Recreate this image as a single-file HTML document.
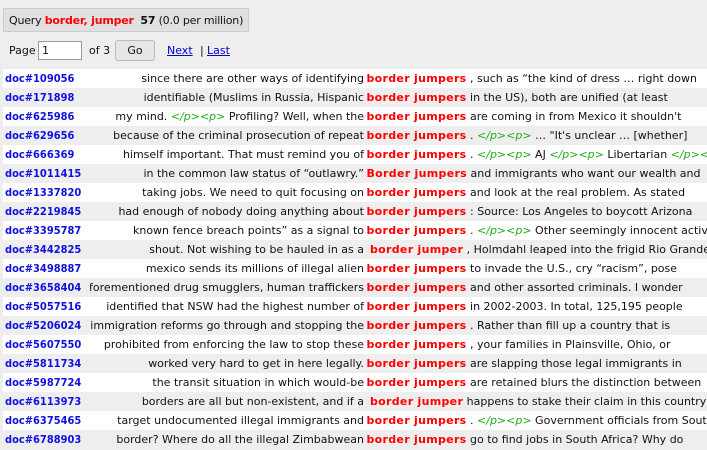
<!DOCTYPE html>
<html><head><meta charset="utf-8"><style>
body{margin:0;background:#eeeeee;font-family:"DejaVu Sans",Verdana,sans-serif;font-size:11px;color:#111;width:707px;height:450px;overflow:hidden;position:relative}
.q{position:absolute;left:3px;top:8px;height:24px;width:246px;background:#e0e0e0;border:1px solid #ccc;border-radius:2px;line-height:24px;padding-left:5px;box-sizing:border-box;font-size:11px;white-space:nowrap;letter-spacing:-0.2px}
.r{color:#f00;font-weight:bold}
.pg{position:absolute;top:40px;left:9px;height:22px;line-height:22px}
.in{position:absolute;left:38px;top:41px;width:44px;height:19px;border:1px solid #999;background:#fff;box-sizing:border-box;line-height:17px;padding-left:3px}
.of{position:absolute;left:89px;top:40px;line-height:22px}
.go{position:absolute;left:115px;top:40px;width:40px;height:21px;border:1px solid #bbb;border-radius:3px;background:#e6e6e6;text-align:center;line-height:20px;box-sizing:border-box}
.lk{position:absolute;top:40px;line-height:22px;color:#0000cc;text-decoration:underline}
.row{position:absolute;left:3px;width:704px;height:19px;line-height:19px;white-space:nowrap;overflow:hidden}
.row.w{background:#fff}
.d{position:absolute;left:2px;color:#1010e0;font-weight:bold;font-family:"DejaVu Sans Condensed","DejaVu Sans",sans-serif;font-size:11px}
.l{position:absolute;left:87px;width:274px;text-align:right;overflow:hidden;direction:rtl}
.l span{direction:ltr;unicode-bidi:embed}
.k{position:absolute;left:360px}
.kw{color:#f00;font-weight:bold;letter-spacing:0.3px}
.g{color:#22aa22;font-style:italic}
</style></head><body>
<div class="q">Query <span class="r">border, jumper</span> &nbsp;<b>57</b> (0.0 per million)</div>
<div class="pg">Page</div><div class="in">1</div><div class="of">of 3</div><div class="go">Go</div>
<div class="lk" style="left:167px">Next</div><div style="position:absolute;left:200px;top:40px;line-height:22px">|</div><div class="lk" style="left:207px">Last</div>

<div class="row w" style="top:69px"><span class="d">doc#109056</span><span class="l"><span>since there are other ways of identifying</span></span><span class="k">&nbsp;<span class="kw">border jumpers</span> , such as “the kind of dress … right down</span></div>
<div class="row" style="top:88px"><span class="d">doc#171898</span><span class="l"><span>identifiable (Muslims in Russia, Hispanic</span></span><span class="k">&nbsp;<span class="kw">border jumpers</span> in the US), both are unified (at least</span></div>
<div class="row w" style="top:107px"><span class="d">doc#625986</span><span class="l"><span>my mind. <span class="g">&lt;/p&gt;&lt;p&gt;</span> Profiling? Well, when the</span></span><span class="k">&nbsp;<span class="kw">border jumpers</span> are coming in from Mexico it shouldn't</span></div>
<div class="row" style="top:126px"><span class="d">doc#629656</span><span class="l"><span>because of the criminal prosecution of repeat</span></span><span class="k">&nbsp;<span class="kw">border jumpers</span> . <span class="g">&lt;/p&gt;&lt;p&gt;</span> … "It's unclear … [whether]</span></div>
<div class="row w" style="top:145px"><span class="d">doc#666369</span><span class="l"><span>himself important. That must remind you of</span></span><span class="k">&nbsp;<span class="kw">border jumpers</span> . <span class="g">&lt;/p&gt;&lt;p&gt;</span> AJ <span class="g">&lt;/p&gt;&lt;p&gt;</span> Libertarian <span class="g">&lt;/p&gt;&lt;p&gt;</span> Less</span></div>
<div class="row" style="top:164px"><span class="d">doc#1011415</span><span class="l"><span>in the common law status of “outlawry.”</span></span><span class="k">&nbsp;<span class="kw">Border jumpers</span> and immigrants who want our wealth and</span></div>
<div class="row w" style="top:183px"><span class="d">doc#1337820</span><span class="l"><span>taking jobs. We need to quit focusing on</span></span><span class="k">&nbsp;<span class="kw">border jumpers</span> and look at the real problem. As stated</span></div>
<div class="row" style="top:202px"><span class="d">doc#2219845</span><span class="l"><span>had enough of nobody doing anything about</span></span><span class="k">&nbsp;<span class="kw">border jumpers</span> : Source: Los Angeles to boycott Arizona</span></div>
<div class="row w" style="top:221px"><span class="d">doc#3395787</span><span class="l"><span>known fence breach points” as a signal to</span></span><span class="k">&nbsp;<span class="kw">border jumpers</span> . <span class="g">&lt;/p&gt;&lt;p&gt;</span> Other seemingly innocent activities</span></div>
<div class="row" style="top:240px"><span class="d">doc#3442825</span><span class="l"><span>shout. Not wishing to be hauled in as a</span></span><span class="k">&nbsp;&nbsp;<span class="kw">border jumper</span> , Holmdahl leaped into the frigid Rio Grande</span></div>
<div class="row w" style="top:259px"><span class="d">doc#3498887</span><span class="l"><span>mexico sends its millions of illegal alien</span></span><span class="k">&nbsp;<span class="kw">border jumpers</span> to invade the U.S., cry “racism”, pose</span></div>
<div class="row" style="top:278px"><span class="d">doc#3658404</span><span class="l"><span>aforementioned drug smugglers, human traffickers</span></span><span class="k">&nbsp;<span class="kw">border jumpers</span> and other assorted criminals. I wonder</span></div>
<div class="row w" style="top:297px"><span class="d">doc#5057516</span><span class="l"><span>identified that NSW had the highest number of</span></span><span class="k">&nbsp;<span class="kw">border jumpers</span> in 2002-2003. In total, 125,195 people</span></div>
<div class="row" style="top:316px"><span class="d">doc#5206024</span><span class="l"><span>immigration reforms go through and stopping the</span></span><span class="k">&nbsp;<span class="kw">border jumpers</span> . Rather than fill up a country that is</span></div>
<div class="row w" style="top:335px"><span class="d">doc#5607550</span><span class="l"><span>prohibited from enforcing the law to stop these</span></span><span class="k">&nbsp;<span class="kw">border jumpers</span> , your families in Plainsville, Ohio, or</span></div>
<div class="row" style="top:354px"><span class="d">doc#5811734</span><span class="l"><span>worked very hard to get in here legally.</span></span><span class="k">&nbsp;<span class="kw">border jumpers</span> are slapping those legal immigrants in</span></div>
<div class="row w" style="top:373px"><span class="d">doc#5987724</span><span class="l"><span>the transit situation in which would-be</span></span><span class="k">&nbsp;<span class="kw">border jumpers</span> are retained blurs the distinction between</span></div>
<div class="row" style="top:392px"><span class="d">doc#6113973</span><span class="l"><span>borders are all but non-existent, and if a</span></span><span class="k">&nbsp;&nbsp;<span class="kw">border jumper</span> happens to stake their claim in this country</span></div>
<div class="row w" style="top:411px"><span class="d">doc#6375465</span><span class="l"><span>target undocumented illegal immigrants and</span></span><span class="k">&nbsp;<span class="kw">border jumpers</span> . <span class="g">&lt;/p&gt;&lt;p&gt;</span> Government officials from South</span></div>
<div class="row" style="top:430px"><span class="d">doc#6788903</span><span class="l"><span>border? Where do all the illegal Zimbabwean</span></span><span class="k">&nbsp;<span class="kw">border jumpers</span> go to find jobs in South Africa? Why do</span></div>
</body></html>
